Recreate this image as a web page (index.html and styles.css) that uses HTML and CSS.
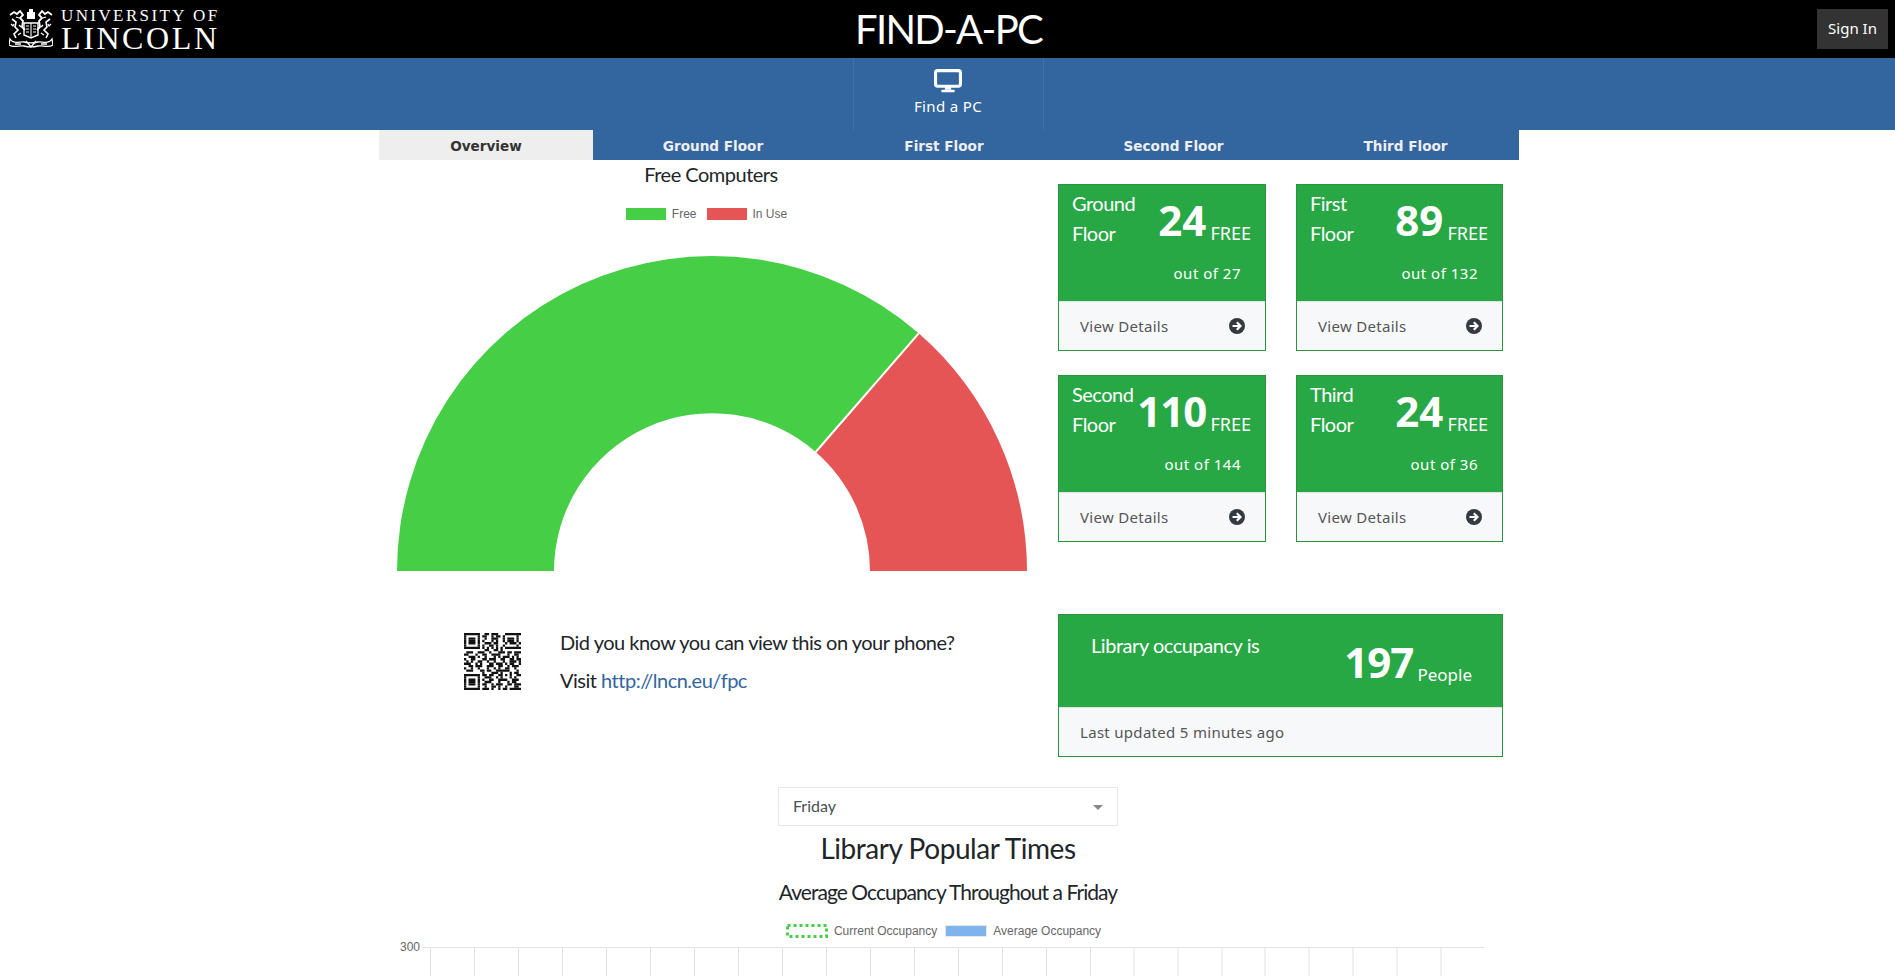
FILE: index.html
```html
<!DOCTYPE html>
<html lang="en">
<head>
    <meta charset="UTF-8">
    <title>Find-A-PC</title>
    <link rel="stylesheet" href="styles.css">
</head>
<body>
<header class="topbar">
    <div class="brand">
        <svg class="crest" viewBox="0 0 44 40" fill="none" stroke="#fff">
            <path d="M1 6l4-3 3 2 3-3 3 4-3 3 3 3-1 6 3 3" stroke-width="1.8"/>
            <path d="M43 6l-4-3-3 2-3-3-3 4 3 3-3 3 1 6-3 3" stroke-width="1.8"/>
            <path d="M3 10l4 3-1 5 3 3-4 4 2 4M41 10l-4 3 1 5-3 3 4 4-2 4" stroke-width="1.6"/>
            <path d="M7 8l3 1M37 8l-3 1M2 15l2 2 1-2M42 15l-2 2-1-2M10 16l2 2M34 16l-2 2M9 26l3-2M35 26l-3-2" stroke-width="1.2"/>
            <path d="M20 0h4v3h2v7h-8V3h2z" fill="#fff" stroke="none"/>
            <path d="M15 14h14v12l-7 3-7-3z" stroke-width="1.4"/>
            <path d="M22 14v14M17 17h3M17 20h3M17 23h3M24 17h3M24 20h3M24 23h3" stroke-width="1.1"/>
            <path d="M1 30c4 6 10 2 14 3 4 1 10 1 14 0 4-1 10 3 14-3l1 6c-5 3-11 0-15 1-4 1-10 1-14 0-4-1-10 2-15-1z" stroke-width="1.3"/>
            <path d="M17 32l5 6 5-6M6 35h6M32 35h6" stroke-width="1.4"/>
        </svg>
        <div class="wordmark">
            <span class="wordmark-top">UNIVERSITY OF</span>
            <span class="wordmark-main">LINCOLN</span>
        </div>
    </div>
    <h1 class="app-title">FIND-A-PC</h1>
    <div class="signin-wrap"><a class="signin" href="#">Sign In</a></div>
</header>

<nav class="mainnav">
    <a class="mainnav-item" href="#">
        <svg class="icon-desktop" viewBox="0 0 27 23" fill="none">
            <rect x="1.5" y="1.5" width="24" height="15" rx="2" stroke="#fff" stroke-width="3"/>
            <path d="M10.5 17h6v3h-6z" fill="#fff"/>
            <rect x="7" y="20" width="13" height="2.4" rx="1" fill="#fff"/>
        </svg>
        <span>Find a PC</span>
    </a>
</nav>

<div class="page">
    <ul class="tabs">
        <li class="tab active">Overview</li>
        <li class="tab">Ground Floor</li>
        <li class="tab">First Floor</li>
        <li class="tab">Second Floor</li>
        <li class="tab">Third Floor</li>
    </ul>

    <div class="overview">
        <section class="left-col">
            <h3 class="chart-title">Free Computers</h3>
            <div class="legend gauge-legend">
                <span class="swatch swatch-free"></span><span>Free</span>
                <span class="swatch swatch-used"></span><span>In Use</span>
            </div>
            <svg class="gauge" viewBox="0 0 665 346" width="665" height="346">
                <!-- centre 333,344 r315 / r158, 131deg free -->
                <path d="M18 344A315 315 0 0 1 539.7 106.3L436.7 225A158 158 0 0 0 175 344Z" fill="#47ce47"/>
                <path d="M539.7 106.3A315 315 0 0 1 648 344H491A158 158 0 0 0 436.7 225Z" fill="#e55555"/>
                <path d="M539.7 106.3L436.7 225" stroke="#fff" stroke-width="2"/>
            </svg>
            <div class="phone-note">
                <svg class="qr" viewBox="0 0 25 25" fill="none" stroke="#111" stroke-width="1.02">
                    <path d="M0 .5h7m2 0h2m1 0h3m3 0h7"/>
                    <path d="M0 1.5h1m5 0h1m1 0h2m2 0h1m1 0h2m1 0h1m5 0h1"/>
                    <path d="M0 2.5h1m1 0h3m1 0h1m2 0h1m2 0h3m2 0h1m1 0h3m1 0h1"/>
                    <path d="M0 3.5h1m1 0h3m1 0h1m1 0h1m3 0h1m1 0h1m2 0h1m1 0h3m1 0h1"/>
                    <path d="M0 4.5h1m1 0h3m1 0h1m2 0h3m1 0h2m3 0h1m1 0h3m1 0h1"/>
                    <path d="M0 5.5h1m5 0h1m1 0h1m2 0h2m1 0h1m2 0h1m5 0h1"/>
                    <path d="M0 6.5h7m1 0h1m1 0h1m1 0h1m1 0h1m1 0h1m1 0h7"/>
                    <path d="M9 7.5h2m2 0h2m1 0h1"/>
                    <path d="M1 8.5h3m2 0h3m2 0h1m3 0h3m1 0h2m1 0h3m1 0h1"/>
                    <path d="M0 9.5h2m3 0h1m2 0h2m2 0h4m3 0h1m2 0h2"/>
                    <path d="M2 10.5h3m1 0h1m2 0h1m3 0h1m1 0h1m1 0h3m1 0h1m1 0h1"/>
                    <path d="M0 11.5h1m2 0h2m3 0h2m1 0h3m2 0h2m2 0h2m1 0h2"/>
                    <path d="M1 12.5h1m1 0h1m2 0h2m2 0h1m2 0h1m3 0h1m2 0h3m1 0h1"/>
                    <path d="M0 13.5h3m2 0h1m1 0h1m3 0h2m1 0h3m1 0h1m1 0h2m2 0h1"/>
                    <path d="M2 14.5h2m1 0h3m2 0h3m2 0h2m2 0h1m1 0h3"/>
                    <path d="M0 15.5h1m2 0h1m2 0h1m3 0h1m2 0h1m1 0h1m2 0h2m2 0h1"/>
                    <path d="M1 16.5h3m3 0h2m1 0h2m2 0h6m3 0h1"/>
                    <path d="M8 17.5h1m3 0h3m1 0h1m3 0h1m1 0h2"/>
                    <path d="M0 18.5h7m1 0h2m1 0h2m2 0h2m1 0h1m1 0h1m2 0h2"/>
                    <path d="M0 19.5h1m5 0h1m2 0h3m2 0h1m1 0h1m3 0h1m1 0h1"/>
                    <path d="M0 20.5h1m1 0h3m1 0h1m1 0h1m2 0h2m2 0h4m2 0h3"/>
                    <path d="M0 21.5h1m1 0h3m1 0h1m2 0h3m3 0h1m3 0h1m1 0h2"/>
                    <path d="M0 22.5h1m1 0h3m1 0h1m1 0h2m2 0h1m1 0h3m2 0h2m1 0h3"/>
                    <path d="M0 23.5h1m5 0h1m2 0h1m2 0h2m1 0h1m2 0h1m3 0h2"/>
                    <path d="M0 24.5h7m1 0h3m1 0h1m2 0h1m1 0h2m1 0h5"/>
                </svg>
                <div class="phone-text">
                    <p>Did you know you can view this on your phone?</p>
                    <p>Visit <a href="#">http://lncn.eu/fpc</a></p>
                </div>
            </div>
        </section>

        <section class="right-col">
            <div class="floor-cards">
                <div class="card">
                    <div class="card-head">
                        <div class="card-name">Ground<br>Floor</div>
                        <div class="card-stat">
                            <div><span class="big">24</span> <span class="free">FREE</span></div>
                            <div class="out-of">out of 27</div>
                        </div>
                    </div>
                    <div class="card-foot">View Details
                        <svg class="icon-go" viewBox="0 0 16 16"><circle cx="8" cy="8" r="8" fill="#343a40"/><path d="M3.5 8h7.5M7.8 4.3L11.5 8l-3.7 3.7" fill="none" stroke="#fff" stroke-width="2.2"/></svg>
                    </div>
                </div>
                <div class="card">
                    <div class="card-head">
                        <div class="card-name">First<br>Floor</div>
                        <div class="card-stat">
                            <div><span class="big">89</span> <span class="free">FREE</span></div>
                            <div class="out-of">out of 132</div>
                        </div>
                    </div>
                    <div class="card-foot">View Details
                        <svg class="icon-go" viewBox="0 0 16 16"><circle cx="8" cy="8" r="8" fill="#343a40"/><path d="M3.5 8h7.5M7.8 4.3L11.5 8l-3.7 3.7" fill="none" stroke="#fff" stroke-width="2.2"/></svg>
                    </div>
                </div>
                <div class="card">
                    <div class="card-head">
                        <div class="card-name">Second<br>Floor</div>
                        <div class="card-stat">
                            <div><span class="big tight">110</span> <span class="free">FREE</span></div>
                            <div class="out-of">out of 144</div>
                        </div>
                    </div>
                    <div class="card-foot">View Details
                        <svg class="icon-go" viewBox="0 0 16 16"><circle cx="8" cy="8" r="8" fill="#343a40"/><path d="M3.5 8h7.5M7.8 4.3L11.5 8l-3.7 3.7" fill="none" stroke="#fff" stroke-width="2.2"/></svg>
                    </div>
                </div>
                <div class="card">
                    <div class="card-head">
                        <div class="card-name">Third<br>Floor</div>
                        <div class="card-stat">
                            <div><span class="big">24</span> <span class="free">FREE</span></div>
                            <div class="out-of">out of 36</div>
                        </div>
                    </div>
                    <div class="card-foot">View Details
                        <svg class="icon-go" viewBox="0 0 16 16"><circle cx="8" cy="8" r="8" fill="#343a40"/><path d="M3.5 8h7.5M7.8 4.3L11.5 8l-3.7 3.7" fill="none" stroke="#fff" stroke-width="2.2"/></svg>
                    </div>
                </div>
            </div>

            <div class="card library-card">
                <div class="library-head">
                    <div class="library-name">Library occupancy is</div>
                    <div class="library-stat"><span class="big tight">197</span> <span class="people">People</span></div>
                </div>
                <div class="card-foot">Last updated 5 minutes ago</div>
            </div>
        </section>
    </div>

    <div class="times">
        <div class="day-select">Friday<span class="caret"></span></div>
        <h2 class="times-title">Library Popular Times</h2>
        <h3 class="times-sub">Average Occupancy Throughout a Friday</h3>
        <div class="legend times-legend">
            <svg class="swatch swatch-current" viewBox="0 0 42 14"><rect x="1.5" y="1.5" width="39" height="11" fill="none" stroke="#47ce47" stroke-width="3" stroke-dasharray="3 3"/></svg><span>Current Occupancy</span>
            <span class="swatch swatch-average"></span><span>Average Occupancy</span>
        </div>
        <svg class="line-chart" viewBox="0 0 1140 40" width="1140" height="40" stroke="#e2e2e2">
            <text x="21" y="12" stroke="none" fill="#666">300</text>
            <path d="M43 8.5H1105"/>
            <path d="M51.5 8V40M95.5 8V40M139.5 8V40M183.5 8V40M227.5 8V40M271.5 8V40M315.5 8V40M359.5 8V40M403.5 8V40M447.5 8V40M491.5 8V40M535.5 8V40M579.5 8V40M623.5 8V40M667.5 8V40M711.5 8V40M755 8V40M799 8V40M843 8V40M886 8V40M930 8V40M974 8V40M1018 8V40M1062 8V40"/>
        </svg>
    </div>
</div>
</body>
</html>
```

FILE: styles.css
```css
html, body {
    height: 100%;
    overflow: hidden;
}

body {
    margin: 0;
    background: #fff;
    color: #212529;
    font-family: "Lato", "Noto Sans", sans-serif;
}

h1, h2, h3, p, ul {
    margin: 0;
    padding: 0;
    font-weight: 400;
}

a {
    text-decoration: none;
}

/* top black bar */
.topbar {
    display: grid;
    grid-template-columns: 1fr auto 1fr;
    align-items: center;
    height: 58px;
    padding: 0 7px 0 9px;
    background: #000;
    color: #fff;
}

.brand {
    display: flex;
    align-items: center;
    gap: 8px;
}

.crest {
    width: 44px;
    height: 40px;
}

.wordmark {
    display: flex;
    flex-direction: column;
    font-family: "Liberation Serif", serif;
}

.wordmark-top {
    font-size: 17px;
    letter-spacing: 2.4px;
    line-height: 18px;
}

.wordmark-main {
    font-size: 32px;
    letter-spacing: 2.6px;
    line-height: 26px;
}

.app-title {
    font-size: 40px;
    font-weight: 400;
    letter-spacing: -1.7px;
}

.signin-wrap {
    text-align: right;
}

.signin {
    display: inline-block;
    width: 71px;
    height: 40px;
    background: #333;
    color: #fff;
    font-family: "Noto Sans", sans-serif;
    font-size: 15px;
    line-height: 38px;
    text-align: center;
}

/* blue nav */
.mainnav {
    display: flex;
    justify-content: center;
    height: 72px;
    padding-left: 1px;
    background: #33659e;
}

.mainnav-item {
    display: flex;
    flex-direction: column;
    align-items: center;
    box-sizing: border-box;
    width: 191px;
    padding-top: 11px;
    border-left: 1px solid #3f72ad;
    border-right: 1px solid #3f72ad;
    color: #fff;
    font-family: "Noto Sans", sans-serif;
    font-size: 15px;
    letter-spacing: .35px;
}

.icon-desktop {
    width: 28px;
    height: 24px;
    margin-bottom: 3px;
}

.page {
    width: 1140px;
    margin-left: 379px;
}

.tabs {
    display: grid;
    grid-template-columns: 214px 240px 222px 233px 231px;
    list-style: none;
}

.tab {
    height: 30px;
    background: #33659e;
    color: #eee;
    font-family: "DejaVu Sans", sans-serif;
    font-size: 13.6px;
    font-weight: 700;
    line-height: 32px;
    text-align: center;
}

.tab.active {
    background: #eee;
    color: #333;
}

.tab:nth-child(n+4) {
    padding-left: 4px;
}

.overview {
    display: flex;
}

.left-col {
    width: 665px;
}

.chart-title {
    margin-top: 2px;
    padding-right: 1px;
    font-size: 20px;
    letter-spacing: -.5px;
    line-height: 24px;
    text-align: center;
}

.legend {
    display: flex;
    align-items: center;
    justify-content: center;
    color: #666;
    font-family: "Liberation Sans", sans-serif;
    font-size: 12px;
}

.swatch {
    box-sizing: border-box;
    width: 40px;
    height: 12px;
    margin-right: 6px;
}

.gauge-legend {
    height: 14px;
    margin-top: 21px;
    padding-right: 10px;
}

.gauge-legend span + .swatch {
    margin-left: 10px;
}

.swatch-free {
    background: #47ce47;
}

.swatch-used {
    background: #e55555;
}

.gauge {
    display: block;
    margin-top: 6px;
}

.phone-note {
    display: flex;
    align-items: center;
    margin-top: 50px;
    padding-left: 85px;
}

.qr {
    width: 57px;
    height: 57px;
    margin-right: 39px;
}

.phone-text {
    font-size: 20px;
    font-weight: 400;
    letter-spacing: -.5px;
    line-height: 38px;
}

.phone-text a {
    color: #33659e;
}

.right-col {
    width: 445px;
    margin-left: 14px;
    padding-top: 24px;
}

.floor-cards {
    display: grid;
    grid-template-columns: 208px 207px;
    gap: 24px 30px;
}

.card {
    border: 1px solid #28963e;
    color: #fff;
}

.card-head {
    display: flex;
    justify-content: space-between;
    box-sizing: border-box;
    height: 116px;
    padding: 2px 14px 0 13px;
    background: #28a745;
}

.card-name {
    padding-top: 1px;
    font-size: 20px;
    letter-spacing: -.5px;
    line-height: 30px;
}

.card-stat {
    padding-top: 7px;
    text-align: right;
}

.big {
    font-family: "Noto Sans", sans-serif;
    font-size: 42px;
    font-weight: 700;
    line-height: 52px;
}

.big.tight {
    letter-spacing: -1px;
}

.free {
    font-family: "Noto Sans", sans-serif;
    font-size: 18px;
    vertical-align: -4px;
}

.out-of {
    margin-top: 17px;
    padding-right: 10px;
    font-family: "Noto Sans", sans-serif;
    font-size: 15px;
    letter-spacing: .5px;
}

.card-foot {
    display: flex;
    align-items: center;
    justify-content: space-between;
    box-sizing: border-box;
    height: 49px;
    padding: 0 20px 0 21px;
    border-top: 1px solid #dfe3e6;
    background: #f7f8fa;
    color: #555;
    font-family: "Noto Sans", sans-serif;
    font-size: 15px;
    letter-spacing: .3px;
}

.icon-go {
    width: 16px;
    height: 16px;
}

.library-card {
    box-sizing: border-box;
    width: 445px;
    margin-top: 72px;
}

.library-head {
    display: flex;
    justify-content: space-between;
    box-sizing: border-box;
    height: 92px;
    padding: 15px 30px 0 32px;
    background: #28a745;
}

.library-name {
    font-size: 20px;
    letter-spacing: -.45px;
    line-height: 30px;
}

.library-stat {
    padding-top: 6px;
}

.people {
    font-family: "Noto Sans", sans-serif;
    font-size: 17px;
    vertical-align: -3px;
}

/* popular times */
.times {
    display: flex;
    flex-direction: column;
    align-items: center;
    padding-top: 30px;
}

.day-select {
    display: flex;
    align-items: center;
    justify-content: space-between;
    box-sizing: border-box;
    width: 340px;
    height: 39px;
    margin-right: 2px;
    padding: 0 14px 2px;
    border: 1px solid #e8e8e8;
    color: #495057;
    font-size: 16px;
}

.caret {
    width: 0;
    height: 0;
    margin-top: 3px;
    border-top: 5px solid #888;
    border-left: 5px solid transparent;
    border-right: 5px solid transparent;
}

.times-title {
    margin-top: 4px;
    padding-right: 2px;
    font-size: 28px;
    font-weight: 400;
    letter-spacing: -.45px;
    line-height: 36px;
}

.times-sub {
    margin-top: 12px;
    padding-right: 2px;
    font-size: 21px;
    font-weight: 400;
    letter-spacing: -.95px;
    line-height: 28px;
}

.times-legend {
    height: 14px;
    margin-top: 18px;
    padding-right: 11px;
}

.times-legend span + .swatch {
    margin-left: 8px;
}

.swatch-current {
    width: 42px;
    height: 14px;
}

.swatch-average {
    width: 42px;
    background: #7eb3ee;
    border: 1px solid #e8e8e8;
}

.line-chart {
    display: block;
    margin-top: 1px;
    font-family: "Liberation Sans", sans-serif;
    font-size: 12px;
}
```
